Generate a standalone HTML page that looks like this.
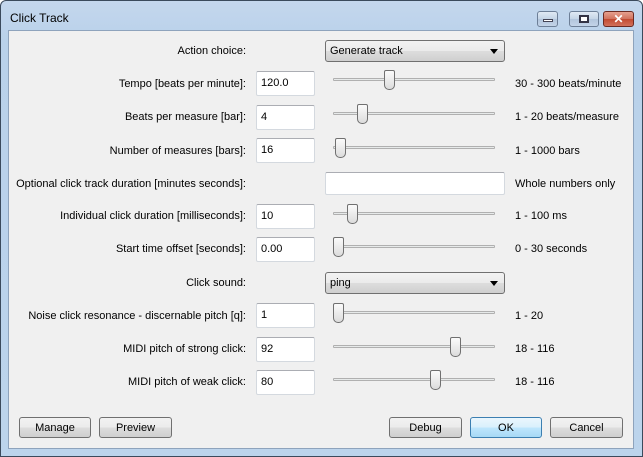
<!DOCTYPE html>
<html><head><style>
*{box-sizing:border-box;margin:0;padding:0}
body{width:643px;height:457px;background:#fff;font-family:"Liberation Sans",sans-serif;font-size:11px;color:#000;position:relative;overflow:hidden}
.frame{position:absolute;left:0;top:0;width:643px;height:457px;border:1px solid #3b4a5c;border-radius:6px 6px 0 0;background:linear-gradient(#c4d7ed,#b9d1ea 40px,#bcd4ec)}
.title{position:absolute;left:10px;top:11px;font-size:12px;color:#000}
.client{position:absolute;left:8px;top:30px;width:626px;height:419px;background:#f0f0f0;border:1px solid #8ea3bc}
.a{position:absolute}
.lbl{position:absolute;text-align:right;width:246px;left:0}
.in{position:absolute;left:256px;width:59px;height:25px;background:#fff;border:1px solid #d4d9df;border-top-color:#abadb3;border-radius:2px;padding:5px 0 0 4px}
.track{position:absolute;left:333px;width:162px;height:3px;border:1px solid #b0b0b0;background:#e7eaea;border-radius:1px}
.th{position:absolute;width:11px;height:20px;border:1px solid #707070;border-radius:2px 2px 5px 5px;background:linear-gradient(#fbfbfb,#dcdcdc)}
.r{position:absolute;left:515px}
.combo{position:absolute;left:325px;width:180px;height:22px;border:1px solid #707070;border-radius:3px;background:linear-gradient(#f2f2f2,#ebebeb 50%,#dddddd 51%,#cfcfcf);padding:4px 0 0 4px}
.combo:after{content:"";position:absolute;right:6px;top:8px;border-left:4px solid transparent;border-right:4px solid transparent;border-top:5px solid #000}
.btn{position:absolute;top:417px;height:21px;border:1px solid #707070;border-radius:3px;background:linear-gradient(#f2f2f2,#ebebeb 50%,#dddddd 51%,#cfcfcf);text-align:center;padding-top:4px}
.wb{position:absolute;top:11px;height:16px;border:1px solid #6d7f97;border-radius:3px;background:linear-gradient(#e0e9f4,#c4d4e6 50%,#b2c5dc 51%,#c3d4e8)}
</style></head><body>
<div class="frame"></div>
<div class="title">Click Track</div>
<div class="wb" style="left:537px;width:21px"><div class="a" style="left:5px;top:7px;width:10px;height:3px;background:#fff;border:1px solid #445"></div></div>
<div class="wb" style="left:569px;width:30px"><div class="a" style="left:9px;top:3px;width:10px;height:8px;border:2px solid #334;background:#fff"></div></div>
<div class="wb" style="left:603px;width:31px;border-color:#6b2a22;background:linear-gradient(#e6a08f,#d0715c 50%,#c24a31 51%,#d2705a);color:#fff;font-weight:bold;font-size:12px;text-align:center;line-height:14px">✕</div>
<div class="client"></div>

<div class="lbl" style="top:45px">Action choice:</div>
<div class="combo" style="top:40px">Generate track</div>

<div class="lbl" style="top:78px">Tempo [beats per minute]:</div>
<div class="in" style="top:71px">120.0</div>
<div class="track" style="top:78px"></div><div class="th" style="left:384px;top:70px"></div>
<div class="r" style="top:78px">30 - 300 beats/minute</div>

<div class="lbl" style="top:111px">Beats per measure [bar]:</div>
<div class="in" style="top:105px">4</div>
<div class="track" style="top:112px"></div><div class="th" style="left:357px;top:104px"></div>
<div class="r" style="top:111px">1 - 20 beats/measure</div>

<div class="lbl" style="top:145px">Number of measures [bars]:</div>
<div class="in" style="top:138px">16</div>
<div class="track" style="top:146px"></div><div class="th" style="left:335px;top:138px"></div>
<div class="r" style="top:145px">1 - 1000 bars</div>

<div class="lbl" style="top:178px">Optional click track duration [minutes seconds]:</div>
<div class="in" style="top:172px;left:325px;width:180px;height:23px"></div>
<div class="r" style="top:178px">Whole numbers only</div>

<div class="lbl" style="top:210px">Individual click duration [milliseconds]:</div>
<div class="in" style="top:204px">10</div>
<div class="track" style="top:212px"></div><div class="th" style="left:347px;top:204px"></div>
<div class="r" style="top:210px">1 - 100 ms</div>

<div class="lbl" style="top:243px">Start time offset [seconds]:</div>
<div class="in" style="top:237px">0.00</div>
<div class="track" style="top:245px"></div><div class="th" style="left:333px;top:237px"></div>
<div class="r" style="top:243px">0 - 30 seconds</div>

<div class="lbl" style="top:277px">Click sound:</div>
<div class="combo" style="top:272px">ping</div>

<div class="lbl" style="top:310px">Noise click resonance - discernable pitch [q]:</div>
<div class="in" style="top:303px">1</div>
<div class="track" style="top:311px"></div><div class="th" style="left:333px;top:303px"></div>
<div class="r" style="top:310px">1 - 20</div>

<div class="lbl" style="top:343px">MIDI pitch of strong click:</div>
<div class="in" style="top:337px">92</div>
<div class="track" style="top:345px"></div><div class="th" style="left:450px;top:337px"></div>
<div class="r" style="top:343px">18 - 116</div>

<div class="lbl" style="top:376px">MIDI pitch of weak click:</div>
<div class="in" style="top:370px">80</div>
<div class="track" style="top:378px"></div><div class="th" style="left:430px;top:370px"></div>
<div class="r" style="top:376px">18 - 116</div>

<div class="btn" style="left:19px;width:72px">Manage</div>
<div class="btn" style="left:99px;width:73px">Preview</div>
<div class="btn" style="left:389px;width:73px">Debug</div>
<div class="btn" style="left:470px;width:72px;border-color:#3c7fb1;background:linear-gradient(#eaf6fd,#d9f0fc 50%,#bee6fd 51%,#a7d9f5)">OK</div>
<div class="btn" style="left:550px;width:73px">Cancel</div>
</body></html>
